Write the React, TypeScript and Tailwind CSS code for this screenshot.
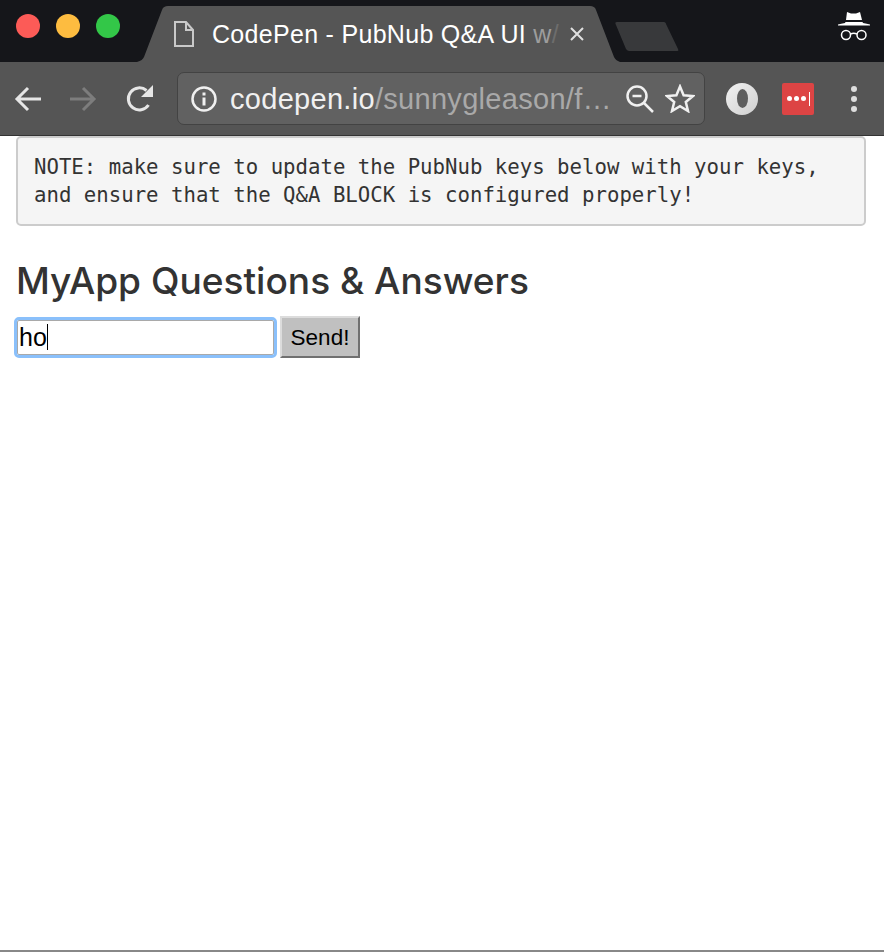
export default function App() {
  return (
    <div className="h-[952px] w-[884px] flex flex-col overflow-hidden bg-white font-['Liberation_Sans',sans-serif]">
      {/* Tab strip */}
      <div className="h-[62px] shrink-0 bg-[#15161a] flex items-start">
        <div className="w-[137px] h-[52px] shrink-0 flex items-center gap-[16px] pl-[16px]">
          <div className="w-[24px] h-[24px] rounded-full bg-[#fc5b57]" />
          <div className="w-[24px] h-[24px] rounded-full bg-[#fdbc40]" />
          <div className="w-[24px] h-[24px] rounded-full bg-[#33c748]" />
        </div>
        <div className="relative w-[483px] h-[62px] shrink-0 flex items-center pl-[36px] pt-[6px]">
          <svg className="absolute left-0 top-0" width="483" height="62" viewBox="0 0 483 62">
            <path d="M0 62 C4 61 6 59 7 57 L25 10 C26 7 28 6 31 6 L453 6 C456 6 458 7 459 10 L477 57 C478 59 480 61 483 62 Z" fill="#555555" />
          </svg>
          <svg className="relative shrink-0" width="22" height="28" viewBox="0 0 22 28" fill="none" stroke="#c9c9c9" strokeWidth="2">
            <path d="M2 2 H13 L20 10 V26 H2 Z M13 2 V10 H20" />
          </svg>
          <div className="relative ml-[17px] w-[355px] text-[25px] leading-[30px] tracking-[0.3px] whitespace-nowrap text-white overflow-hidden">
            CodePen - PubNub Q&amp;A UI{" "}
            <span className="text-[#9d9d9d]">w</span>
            <span className="text-[#6d6d6d]">/</span>
          </div>
          <svg className="relative shrink-0 ml-[2px]" width="16" height="16" viewBox="0 0 16 16" stroke="#e0e0e0" strokeWidth="2">
            <path d="M2 2 L14 14 M14 2 L2 14" />
          </svg>
        </div>
        <svg className="shrink-0 -ml-[5px] mt-[22px]" width="64" height="30" viewBox="0 0 64 30">
          <path d="M2 0 H49 C50 0 51 1 51 2 L63 27 C64 29 63 29 61 29 H14 C13 29 12 28 11 27 L1 3 C0 1 0 0 2 0 Z" fill="#38393b" />
        </svg>
        <svg className="ml-auto mr-[14px] mt-[11px]" width="32" height="30" viewBox="0 0 32 30" fill="#ffffff">
          <path d="M9 1 L13 2.5 H18 L22 1 L24 9 H8 Z" />
          <path d="M0 13.5 Q3 12.5 7 12 L7.5 11 H24.5 L25 12 Q29 12.5 32 13.5 V14.5 H0 Z" />
          <circle cx="8" cy="24" r="4.5" fill="none" stroke="#ffffff" strokeWidth="1.5" />
          <circle cx="23.5" cy="24" r="4.5" fill="none" stroke="#ffffff" strokeWidth="1.5" />
          <path d="M12.5 23 Q15.7 21.5 19 23" fill="none" stroke="#ffffff" strokeWidth="1.5" />
        </svg>
      </div>

      {/* Toolbar */}
      <div className="h-[74px] shrink-0 bg-[#555555] border-b border-[#333333] flex items-center">
        <svg className="ml-[14px] shrink-0" width="27" height="26" viewBox="0 0 27 26" fill="none" stroke="#e6e6e6" strokeWidth="3">
          <path d="M27 13 H3 M14 2 L3 13 L14 24" />
        </svg>
        <svg className="ml-[29px] shrink-0" width="27" height="26" viewBox="0 0 27 26" fill="none" stroke="#7d7d7d" strokeWidth="3">
          <path d="M0 13 H24 M13 2 L24 13 L13 24" />
        </svg>
        <svg className="ml-[29px] shrink-0" width="28" height="28" viewBox="0 0 28 28" fill="none">
          <path d="M22.5 20 A11 11 0 1 1 20.5 5.5" stroke="#e6e6e6" strokeWidth="3" />
          <path d="M27 0 V12 H15 Z" fill="#e6e6e6" />
        </svg>
        <div className="ml-[23px] w-[528px] h-[53px] rounded-[7px] bg-[#616161] border border-[#434343] flex items-center">
          <svg className="ml-[12px] shrink-0" width="28" height="28" viewBox="0 0 28 28" fill="none">
            <circle cx="14" cy="14" r="11.5" stroke="#f0f0f0" strokeWidth="2.5" />
            <rect x="12.5" y="12.5" width="3" height="8" fill="#f0f0f0" />
            <rect x="12.5" y="7.5" width="3" height="3" fill="#f0f0f0" />
          </svg>
          <div className="ml-[12px] w-[385px] text-[29px] leading-[36px] tracking-[0.3px] whitespace-nowrap overflow-hidden text-[#a9a9a9]">
            <span className="text-[#f0f0f0]">codepen.io</span>/sunnygleason/f…
          </div>
          <svg className="ml-[11px] shrink-0" width="28" height="28" viewBox="0 0 28 28" fill="none" stroke="#f0f0f0" strokeWidth="2.5">
            <circle cx="11" cy="11" r="9.5" />
            <path d="M6.5 11 H15.5 M18 18 L27 27" />
          </svg>
          <svg className="ml-[11px] shrink-0" width="30" height="29" viewBox="0 0 30 29" fill="none" stroke="#f0f0f0" strokeWidth="2.5" strokeLinejoin="miter">
            <path d="M15 2.5 L18.6 11.2 L28 12 L20.8 18 L23 27 L15 22.2 L7 27 L9.2 18 L2 12 L11.4 11.2 Z" />
          </svg>
        </div>
        <div className="ml-[21px] w-[32px] h-[32px] rounded-full bg-gradient-to-br from-[#f2f2f2] to-[#cfcfcf] flex items-center justify-center shrink-0">
          <div className="w-[11px] h-[19px] rounded-[50%] bg-[#5e5e5e]" />
        </div>
        <div className="ml-[24px] w-[32px] h-[32px] rounded-[2px] bg-[#dd4444] flex items-center justify-center gap-[2px] shrink-0">
          <div className="w-[5px] h-[5px] rounded-full bg-white" />
          <div className="w-[5px] h-[5px] rounded-full bg-white" />
          <div className="w-[5px] h-[5px] rounded-full bg-white" />
          <div className="w-[1px] h-[14px] bg-white ml-[1px]" />
        </div>
        <div className="ml-[37px] flex flex-col gap-[4px] shrink-0">
          <div className="w-[6px] h-[6px] rounded-full bg-[#dedede]" />
          <div className="w-[6px] h-[6px] rounded-full bg-[#dedede]" />
          <div className="w-[6px] h-[6px] rounded-full bg-[#dedede]" />
        </div>
      </div>

      {/* Page */}
      <div className="flex-1 border-b-2 border-[#888888] px-[16px]">
        <pre className="h-[90px] w-[850px] rounded-[5px] border-2 border-[#cccccc] bg-[#f5f5f5] px-[16px] pt-[15px] font-['DejaVu_Sans_Mono',monospace] text-[20.7px] leading-[28px] text-[#333333]">
          {"NOTE: make sure to update the PubNub keys below with your keys,\nand ensure that the Q&A BLOCK is configured properly!"}
        </pre>
        <h1 className="mt-[33px] font-['Inter',sans-serif] text-[37.1px] leading-[44px] [font-weight:550] text-[#333333]">
          MyApp Questions &amp; Answers
        </h1>
        <div className="mt-[13px] flex items-center">
          <div className="ml-[1px] w-[257px] h-[35px] border border-[#a9a9a9] bg-white outline-[3px] outline-[#8ac0fb] rounded-[2px] flex items-center pl-[1px] pt-[2px] text-[25px] text-black">
            ho
            <div className="w-[1.5px] h-[26px] -mt-[2px] bg-black" />
          </div>
          <button className="ml-[6px] w-[80px] h-[42px] bg-[#c0c0c0] border-2 border-t-[#dcdcdc] border-l-[#dcdcdc] border-r-[#707070] border-b-[#707070] pt-[2px] text-[22.5px] text-black">
            Send!
          </button>
        </div>
      </div>
    </div>
  );
}
